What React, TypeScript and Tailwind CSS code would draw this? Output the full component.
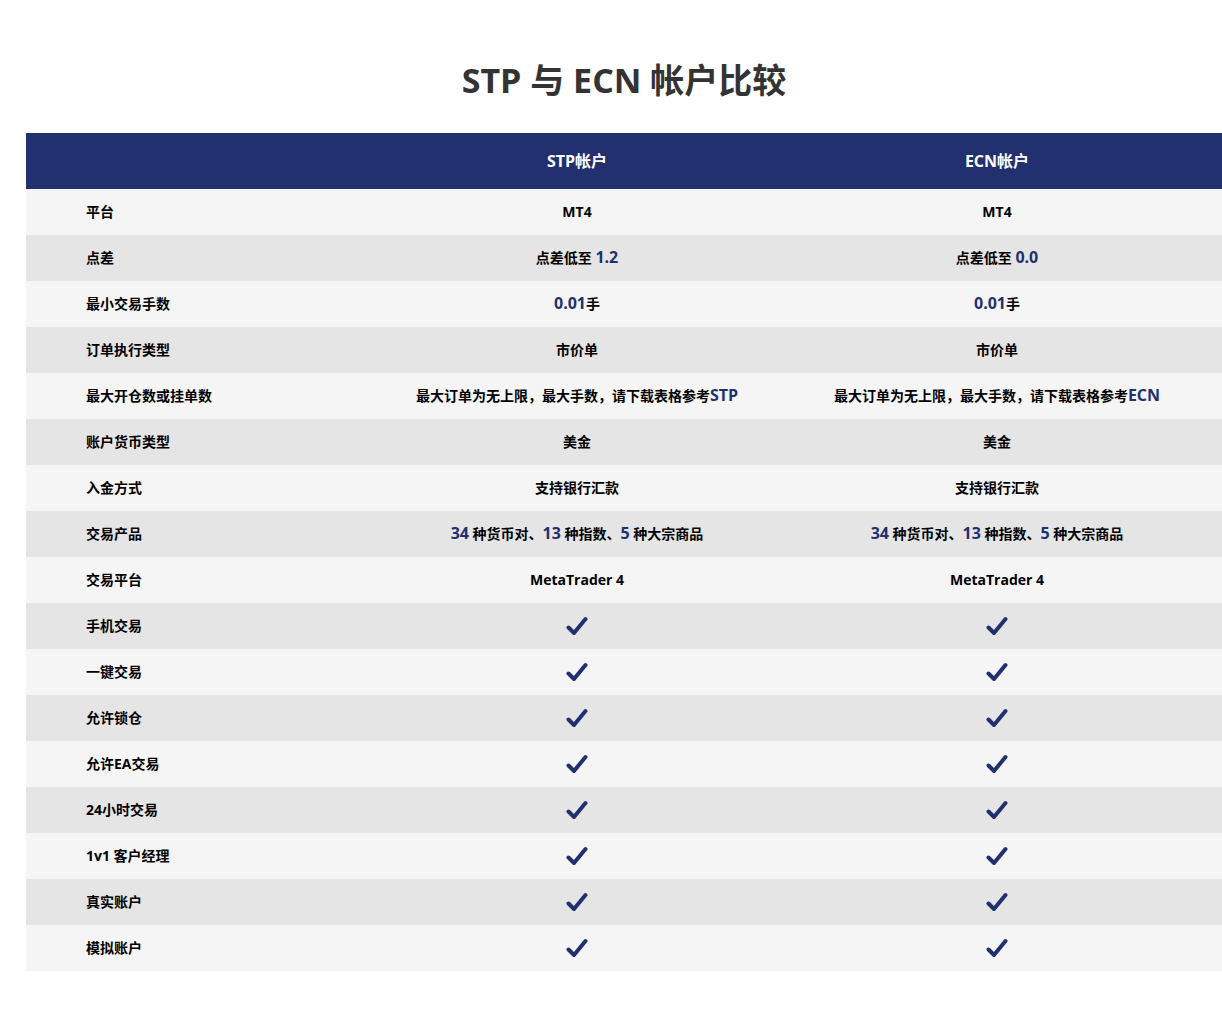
import React from "react"

const Check = () => (
  <svg width="22" height="20" viewBox="0 0 22 20" className="inline-block">
    <path d="M2.5 11.5 L8 17 L19.5 3" fill="none" stroke="#22306f" strokeWidth="4" strokeLinecap="round" strokeLinejoin="round" />
  </svg>
)

const Num: React.FC<{ children: React.ReactNode }> = ({ children }) => (
  <span className="text-[16px] font-bold text-[#22306f]">{children}</span>
)

type Row = { label: React.ReactNode; stp: React.ReactNode; ecn: React.ReactNode }

const rows: Row[] = [
  { label: "平台", stp: "MT4", ecn: "MT4" },
  { label: "点差", stp: <>点差低至 <Num>1.2</Num></>, ecn: <>点差低至 <Num>0.0</Num></> },
  { label: "最小交易手数", stp: <><Num>0.01</Num>手</>, ecn: <><Num>0.01</Num>手</> },
  { label: "订单执行类型", stp: "市价单", ecn: "市价单" },
  {
    label: "最大开仓数或挂单数",
    stp: <>最大订单为无上限，最大手数，请下载表格参考<Num>STP</Num></>,
    ecn: <>最大订单为无上限，最大手数，请下载表格参考<Num>ECN</Num></>,
  },
  { label: "账户货币类型", stp: "美金", ecn: "美金" },
  { label: "入金方式", stp: "支持银行汇款", ecn: "支持银行汇款" },
  {
    label: "交易产品",
    stp: <><Num>34</Num> 种货币对、<Num>13</Num> 种指数、<Num>5</Num> 种大宗商品</>,
    ecn: <><Num>34</Num> 种货币对、<Num>13</Num> 种指数、<Num>5</Num> 种大宗商品</>,
  },
  { label: "交易平台", stp: "MetaTrader 4", ecn: "MetaTrader 4" },
  ...["手机交易", "一键交易", "允许锁仓", "允许EA交易", "24小时交易", "1v1 客户经理", "真实账户", "模拟账户"].map(
    (l) => ({ label: l, stp: <Check />, ecn: <Check /> })
  ),
]

export default function App() {
  return (
    <div className="min-h-[1035px] bg-white pl-[26px] font-['Open_Sans','Noto_Sans_CJK_SC',sans-serif] text-black">
      <div className="w-[1196px]">
        <h1 className="flex h-[133px] items-center justify-center pb-[12px] pt-[40px] text-[34px] font-bold text-[#333]">
          STP 与 ECN 帐户比较
        </h1>

        {/* header */}
        <div className="grid h-[56px] grid-cols-[341px_420px_420px_1fr] items-center bg-[#22306f] text-[16px] font-bold text-white">
          <div />
          <div className="text-center">STP帐户</div>
          <div className="text-center">ECN帐户</div>
          <div />
        </div>

        {/* rows */}
        {rows.map((r, i) => (
          <div
            key={i}
            className={`grid h-[46px] grid-cols-[341px_420px_420px_1fr] items-center pb-[2px] text-[14px] font-bold ${
              i % 2 === 0 ? "bg-[#f5f5f5]" : "bg-[#e5e5e5]"
            }`}
          >
            <div className="pl-[60px]">{r.label}</div>
            <div className="flex items-center justify-center">
              <span>{r.stp}</span>
            </div>
            <div className="flex items-center justify-center">
              <span>{r.ecn}</span>
            </div>
            <div />
          </div>
        ))}
      </div>
    </div>
  )
}
